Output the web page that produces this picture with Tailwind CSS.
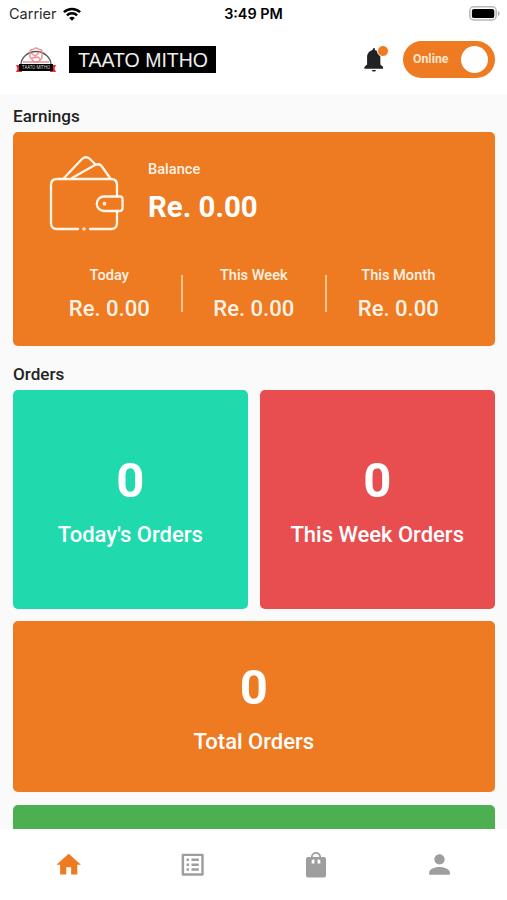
<!DOCTYPE html>
<html lang="en">
<head>
<meta charset="utf-8">
<title>Taato Mitho</title>
<script src="https://cdn.jsdelivr.net/npm/@tailwindcss/browser@4"></script>
</head>
<body class="bg-white">
<div class="w-[507px] h-[900px] flex flex-col overflow-hidden bg-[#fafafa] font-[Roboto,sans-serif] text-white">
  <header class="h-[94px] shrink-0 bg-white text-black">
    <div class="h-[27px] grid grid-cols-3 items-center pl-[9px] pr-[7px] font-[Inter,sans-serif] text-[14px]">
      <div class="flex items-center gap-[6px] text-[#2a2a2a]">
        <span class="text-[14.5px]">Carrier</span>
        <svg class="w-[18px] h-[14px]" viewBox="0 0 18 14" fill="none" stroke="#000" stroke-width="2.5"><path d="M.9 5.2a11.6 11.6 0 0 1 16.2 0M3.9 8.3a7.3 7.3 0 0 1 10.2 0"/><path d="M9 13.8 6.2 11a4 4 0 0 1 5.6 0z" fill="#000" stroke="none"/></svg>
      </div>
      <span class="text-center text-[14.4px] font-semibold whitespace-nowrap -ml-[2px]">3:49 PM</span>
      <svg class="w-[31px] h-[15px] justify-self-end" viewBox="0 0 31 15"><rect x=".8" y=".8" width="26.4" height="13.2" rx="4" fill="#fff" stroke="#b8b8b8" stroke-width="1.5"/><rect x="2.9" y="2.900" width="22.4" height="9.200" rx="2.200"/><path d="M28.900 5v5c2.200-.8 2.200-4.200 0-5z" fill="#aaa"/></svg>
    </div>
    <div class="h-[65px] flex items-center pl-[15px] pr-[12px]">
      <svg class="w-[42px] h-[26px]" viewBox="0 0 42 26">
        <path d="M6 18a15 13.500 0 0 1 30 0" fill="none" stroke="#555" stroke-width="1.300"/>
        <g fill="none" stroke="#f08f96" stroke-width="1.400"><path d="M15 10V5q0-3 3-2.500 3-3 6 0 3-.5 3 2.500v6l-4 4h-4z"/><path d="m16 6 4 3 5-4M17 11l6-1 3 3M8 15h26"/></g>
        <path d="M1 18h6v7H1l1.500-3.500zM41 18h-6v7h6l-1.500-3.500z" fill="#ed2734"/>
        <path d="M4 17h34v7H4z" fill="#000"/>
        <text x="21" y="22.400" text-anchor="middle" font-size="5" textLength="28" lengthAdjust="spacingAndGlyphs" fill="#ddd">TAATO MITHO</text>
      </svg>
      <div class="ml-3 w-[147px] h-[27px] bg-black text-[#eee] pl-[9px] font-['Liberation_Sans',sans-serif] text-[19.5px] leading-[28px] whitespace-nowrap">TAATO MITHO</div>
      <div class="ml-auto relative w-[28px] h-[30px]">
        <svg class="w-[26px] h-[28px] ml-[1px]" viewBox="0 0 28 30" fill="#222"><path d="M10.800 3.500h2v1.900c3.300.9 5.900 3.500 5.900 7.800v7.800l2.900 2.500v2H1.500v-2l2.900-2.500v-7.800c0-4.300 2.600-6.900 5.900-7.800zM9.400 26.800h4.600c-.3 2.300-4.300 2.300-4.600 0z"/></svg>
        <span class="absolute left-[15px] top-0 w-[12px] h-[12px] rounded-full bg-[#ee7a22] border border-white"></span>
      </div>
      <div class="ml-[13px] w-[92px] h-[37px] rounded-full bg-[#ee7a22] flex items-center justify-between pl-[10px] pr-[7px]">
        <span class="text-[12.300px] font-bold text-[#ffe5cf]">Online</span>
        <span class="w-[27px] h-[27px] rounded-full bg-white"></span>
      </div>
    </div>
  </header>

  <main class="flex-1 min-h-0 overflow-hidden pl-[13px] pr-[12.5px] pt-[11.500px]">
    <h1 class="text-[17.1px] leading-5 font-medium text-[#222]">Earnings</h1>
    <section class="mt-[6px] h-[214px] rounded-[5px] bg-[#ee7a22] flex flex-col">
      <div class="flex pl-[36px] pt-[23px] h-[133px]">
        <svg class="w-[76px] h-[76px]" viewBox="0 0 76 76" fill="none" stroke="#fff6e8" stroke-width="2.300" stroke-linecap="round" stroke-linejoin="round">
          <path d="M29 74H8q-6 0-6-6V30q0-6 6-6h54q6 0 6 6v11M41 74h21q6 0 6-6V56"/>
          <path d="M15 23 33 4q4-3.500 8 0l6 6M23 23l23-13q5-2.500 8 3l7 10"/>
          <path d="M55 41.500h16q2.500 0 2.500 2.500v9q0 3-3 3H55a7.250 7.250 0 0 1 0-14.500z"/>
          <circle cx="55.500" cy="48.700" r=".7"/><circle cx="35" cy="74" r=".6"/>
        </svg>
        <div class="pl-[23px] pt-[4px]">
          <p class="text-[14.600px] leading-5 font-medium text-[#fff3e6]">Balance</p>
          <p class="mt-[10px] text-[29.4px] leading-9 font-bold">Re. 0.00</p>
        </div>
      </div>
      <div class="grid grid-cols-3 mx-[24px] text-center text-[#fff3e6]">
        <div class="relative"><p class="text-[14.600px] leading-5 font-medium">Today</p><p class="mt-[10px] text-[22px] leading-7 font-medium">Re. 0.00</p><i class="absolute right-[-1px] top-[10px] w-[2px] h-[37px] bg-[#ffc48c]"></i></div>
        <div class="relative"><p class="text-[14.600px] leading-5 font-medium">This Week</p><p class="mt-[10px] text-[22px] leading-7 font-medium">Re. 0.00</p><i class="absolute right-[-1px] top-[10px] w-[2px] h-[37px] bg-[#ffc48c]"></i></div>
        <div><p class="text-[14.600px] leading-5 font-medium">This Month</p><p class="mt-[10px] text-[22px] leading-7 font-medium">Re. 0.00</p></div>
      </div>
    </section>

    <h2 class="mt-[18px] text-[17.1px] leading-5 font-medium text-[#222]">Orders</h2>
    <section class="mt-[6px] grid grid-cols-2 gap-[12.300px] text-center">
      <div class="h-[219.500px] rounded-[5px] bg-[#20d9ad] pt-[62px]"><p class="text-[49px] leading-[58px] font-bold">0</p><p class="mt-[11px] text-[22px] leading-7 font-medium">Today's Orders</p></div>
      <div class="h-[219.500px] rounded-[5px] bg-[#e84e50] pt-[62px]"><p class="text-[49px] leading-[58px] font-bold">0</p><p class="mt-[11px] text-[22px] leading-7 font-medium">This Week Orders</p></div>
      <div class="col-span-2 h-[171px] rounded-[5px] bg-[#ee7a22] pt-[38px]"><p class="text-[49px] leading-[58px] font-bold">0</p><p class="mt-[11px] text-[22px] leading-7 font-medium">Total Orders</p></div>
      <div class="col-span-2 h-[171px] rounded-[5px] bg-[#4caf50]"></div>
    </section>
  </main>

  <nav class="h-[71px] shrink-0 bg-white grid grid-cols-4 justify-items-center items-center pl-[7px] pr-[6px] text-[#9e9e9e]">
    <svg class="w-[29.4px] h-[29.4px] text-[#ee7a22]" viewBox="0 0 24 24" fill="currentColor"><path d="M10 20v-6h4v6h5v-8h3L12 3 2 12h3v8z"/></svg>
    <svg class="w-[29.4px] h-[29.4px]" viewBox="0 0 24 24" fill="currentColor"><path d="M19 5v14H5V5h14m1.100-2H3.900c-.5 0-.9.400-.9.900v16.200c0 .4.400.9.900.9h16.200c.4 0 .9-.5.900-.9V3.900c0-.5-.5-.9-.9-.9zM11 7h6v2h-6V7zm0 4h6v2h-6v-2zm0 4h6v2h-6zM7 7h2v2H7zm0 4h2v2H7zm0 4h2v2H7z"/></svg>
    <svg class="w-[22px] h-[27px]" viewBox="0 0 22 27"><path d="M3 6h16q2 0 2 2v16.500q0 2-2 2H3q-2 0-2-2V8q0-2 2-2z" fill="currentColor"/><path d="M6.700 8.500h2.700v4H6.700zM12.600 8.500h2.700v4h-2.700z" fill="#fff"/><path d="M6.800 9V6a4.200 4.200 0 0 1 8.400 0v3" fill="none" stroke="currentColor" stroke-width="1.800"/></svg>
    <svg class="w-[31px] h-[31px]" viewBox="0 0 24 24" fill="currentColor"><path d="M12 12c2.210 0 4-1.790 4-4s-1.790-4-4-4-4 1.790-4 4 1.790 4 4 4zm0 2c-2.670 0-8 1.340-8 4v2h16v-2c0-2.660-5.330-4-8-4z"/></svg>
  </nav>
</div>
</body>
</html>
